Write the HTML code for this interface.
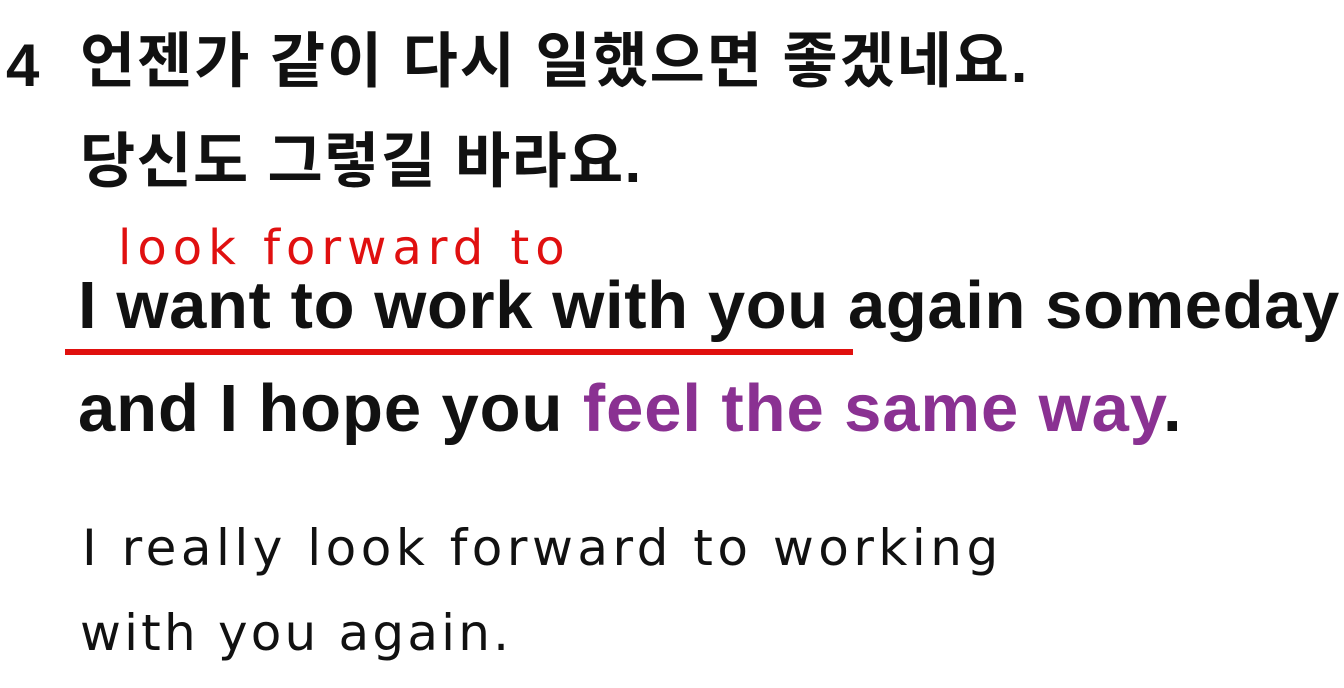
<!DOCTYPE html>
<html><head><meta charset="utf-8"><style>
html,body{margin:0;padding:0;background:#fff;width:1344px;height:688px;overflow:hidden}
.t{position:absolute;white-space:nowrap;line-height:1}
.ko{font-family:"Liberation Sans","Noto Sans CJK KR",sans-serif;font-weight:bold;font-size:60px;color:#111}
.en{font-family:"Liberation Sans",sans-serif;font-weight:bold;font-size:67px;color:#111}
.hw{font-family:"DejaVu Sans",sans-serif;font-weight:normal;color:#111}
</style></head><body>
<div class="t ko" style="left:6px;top:36px">4</div>
<div class="t ko" style="left:80px;top:32px;letter-spacing:1.9px">언젠가 같이 다시 일했으면 좋겠네요.</div>
<div class="t ko" style="left:80px;top:132px;letter-spacing:1.3px">당신도 그렇길 바라요.</div>
<div class="t hw" style="left:118px;top:224px;font-size:48px;color:#e01010;letter-spacing:6px">look forward to</div>
<div class="t en" style="left:78px;top:272px;letter-spacing:0.6px">I want to work with you again someday</div>
<div style="position:absolute;left:65px;top:349px;width:788px;height:6px;background:#e0100e"></div>
<div class="t en" style="left:78px;top:375px;letter-spacing:0.9px">and I hope you <span style="color:#8a3192">feel the same way</span>.</div>
<div class="t hw" style="left:82px;top:523px;font-size:50px;letter-spacing:4.5px">I really look forward to working</div>
<div class="t hw" style="left:80px;top:608px;font-size:50px;letter-spacing:3.2px">with you again.</div>
</body></html>
